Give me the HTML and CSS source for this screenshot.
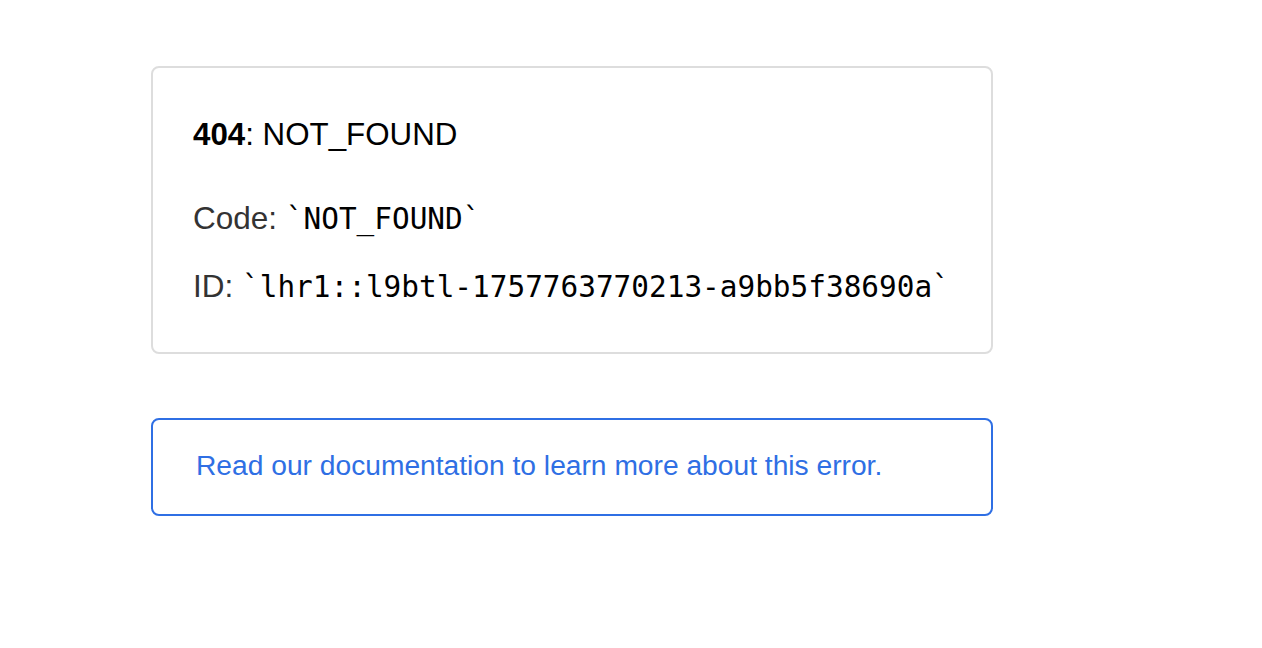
FILE: index.html
```html
<!DOCTYPE html>
<html lang="en">
<head>
<meta charset="utf-8">
<title>404: NOT_FOUND</title>
<link rel="stylesheet" href="styles.css">
</head>
<body>
<main class="main">
  <section class="card">
    <h1 class="title"><strong>404</strong>: NOT_FOUND</h1>
    <p class="line line-code">Code: <code class="mono">`NOT_FOUND`</code></p>
    <p class="line line-id">ID: <code class="mono">`lhr1::l9btl-1757763770213-a9bb5f38690a`</code></p>
  </section>
  <a class="doc-link" href="#">Read our documentation to learn more about this error.</a>
</main>
</body>
</html>
```
FILE: styles.css
```css
html, body {
  margin: 0;
  padding: 0;
  background: #fff;
}
body {
  font-family: "Liberation Sans", Arial, sans-serif;
  color: #000;
}
.main {
  display: flex;
  flex-direction: column;
  align-items: flex-start;
  padding: 66px 0 0 151px;
}
.card {
  box-sizing: border-box;
  width: 842px;
  border: 2px solid #dddddd;
  border-radius: 8px;
  padding: 48px 40px 47px 40px;
}
.title {
  margin: 0;
  font-size: 31.3px;
  line-height: 37px;
  font-weight: normal;
  color: #000;
}
.title strong {
  font-weight: bold;
}
.line {
  margin: 0;
  font-size: 31.5px;
  line-height: 37px;
  color: #333;
}
.line-code {
  margin-top: 47px;
}
.line-id {
  margin-top: 31px;
}
.mono {
  font-family: "DejaVu Sans Mono", "Liberation Mono", monospace;
  font-size: 29.4px;
  line-height: 1;
  color: #000;
}
.doc-link {
  box-sizing: border-box;
  display: block;
  width: 842px;
  margin-top: 64px;
  height: 98px;
  border: 2px solid #2f6fe4;
  border-radius: 8px;
  padding: 27px 43px 0 43px;
  font-size: 28.2px;
  line-height: 37px;
  color: #2f6fe4;
  text-decoration: none;
}
```
